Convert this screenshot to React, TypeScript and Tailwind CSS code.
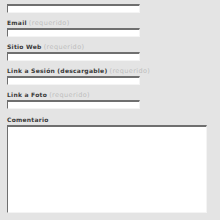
export default function App() {
  const fields = ["Email", "Sitio Web", "Link a Sesión (descargable)", "Link a Foto"];
  const box =
    "bg-white border-t-2 border-l border-t-[#6f6f6f] border-l-[#6f6f6f] border-r border-b border-r-[#f4f4f4] border-b-[#f4f4f4]";

  return (
    <div className="w-[220px] h-[220px] overflow-hidden bg-[#e4e4e4] pl-[7px] pt-[4px] font-['DejaVu_Sans',sans-serif]">
      <div className={`w-[133px] h-[9px] ${box}`} />
      {fields.map((label) => (
        <div key={label} className="flex flex-col">
          <div className="h-[15px] pt-[6px] text-[6.5px] leading-[8px] whitespace-nowrap">
            <span className="font-bold text-[6px] text-[#3a3a3a] tracking-[0.25px]">{label}</span>{" "}
            <span className="text-[#bdbdbd] tracking-[0.4px]">(requerido)</span>
          </div>
          <div className={`w-[133px] h-[9px] ${box}`} />
        </div>
      ))}
      <div className="h-[16px] pt-[7px] text-[6.5px] leading-[8px] whitespace-nowrap">
        <span className="font-bold text-[6px] text-[#3a3a3a] tracking-[0.25px]">Comentario</span>
      </div>
      <div className={`w-[200px] h-[88px] ${box}`} />
    </div>
  );
}
